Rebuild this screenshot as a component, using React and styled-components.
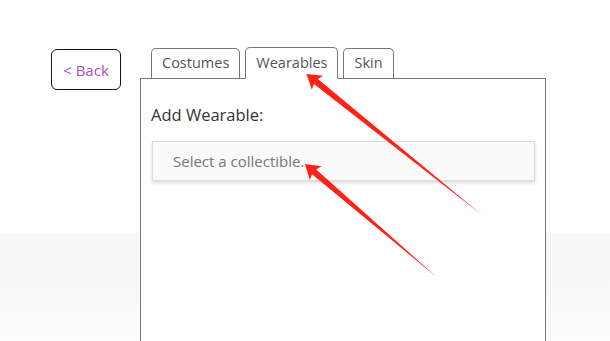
import styled, { createGlobalStyle } from "styled-components";
import { useState } from "react";

const GlobalStyle = createGlobalStyle`
  html, body {
    margin: 0;
    padding: 0;
  }
  body {
    min-height: 341px;
    font-family: "Open Sans", "Noto Sans", sans-serif;
    background: linear-gradient(
      to bottom,
      #ffffff 0,
      #ffffff 232px,
      #f7f7f7 233px,
      #f9f9f9 290px,
      #fcfcfc 341px
    );
    background-repeat: no-repeat;
    overflow: hidden;
  }
`;

const Styled = {
  Page: styled.div`
    position: relative;
    display: flex;
    align-items: flex-start;
    gap: 19px;
    padding: 47px 0 0 51px;
    height: 341px;
    box-sizing: border-box;
    overflow: hidden;
  `,

  BackButton: styled.button`
    margin-top: 2px;
    width: 70px;
    height: 41px;
    box-sizing: border-box;
    border: 1px solid #111;
    border-radius: 6px;
    background: #fff;
    color: #a64fbf;
    font-family: inherit;
    font-size: 15px;
    padding: 0;
    cursor: pointer;
  `,

  Editor: styled.div`
    display: flex;
    flex-direction: column;
    width: 406px;
  `,

  TabList: styled.div`
    display: flex;
    align-items: flex-end;
    gap: 5px;
    padding-left: 11px;
    position: relative;
    z-index: 1;
  `,

  Tab: styled.button`
    height: ${({ $active }) => ($active ? "32px" : "30px")};
    margin-bottom: ${({ $active }) => ($active ? "-1px" : "0")};
    box-sizing: border-box;
    padding: 0 10px;
    border: 1px solid #777;
    border-bottom: ${({ $active }) => ($active ? "1px solid #fff" : "none")};
    border-radius: 5px 5px 0 0;
    background: #fff;
    color: #555;
    font-family: inherit;
    font-size: 14.5px;
    line-height: 1;
    cursor: pointer;
  `,

  Panel: styled.div`
    border: 1px solid #777;
    background: #fff;
    min-height: 300px;
    padding: 24px 10px 0 10px;
  `,

  Label: styled.div`
    font-size: 16.5px;
    color: #333;
    line-height: 24px;
    margin-bottom: 14px;
  `,

  Select: styled.div`
    margin: 0 0 0 1px;
    height: 40px;
    box-sizing: border-box;
    display: flex;
    align-items: center;
    padding-left: 20px;
    background: #fafafa;
    border: 1px solid #dcdcdc;
    box-shadow: 0 2px 3px rgba(0, 0, 0, 0.14);
    color: #777;
    font-size: 15px;
  `,

  Annotations: styled.svg`
    position: absolute;
    left: 0;
    top: 0;
    width: 610px;
    height: 341px;
    pointer-events: none;
    z-index: 2;
  `,
};

const arrowPoints = (tip, tail, head = 14, barb = 9, shaft = 3.2) => {
  const dx = tail[0] - tip[0];
  const dy = tail[1] - tip[1];
  const len = Math.hypot(dx, dy);
  const ux = dx / len;
  const uy = dy / len;
  const px = -uy;
  const py = ux;
  const base = [tip[0] + ux * head, tip[1] + uy * head];
  const inner = [tip[0] + ux * (head - 2), tip[1] + uy * (head - 2)];
  const pts = [
    tip,
    [base[0] - px * barb, base[1] - py * barb],
    [inner[0] - px * shaft, inner[1] - py * shaft],
    tail,
    [inner[0] + px * shaft, inner[1] + py * shaft],
    [base[0] + px * barb, base[1] + py * barb],
  ];
  return pts.map((p) => p.map((v) => v.toFixed(1)).join(",")).join(" ");
};

const tabs = ["Costumes", "Wearables", "Skin"];

function App() {
  const [active, setActive] = useState("Wearables");
  return (
    <>
      <GlobalStyle />
      <Styled.Page>
        <Styled.BackButton>&lt; Back</Styled.BackButton>
        <Styled.Editor>
          <Styled.TabList>
            {tabs.map((t) => (
              <Styled.Tab
                key={t}
                $active={t === active}
                onClick={() => setActive(t)}
              >
                {t}
              </Styled.Tab>
            ))}
          </Styled.TabList>
          <Styled.Panel>
            <Styled.Label>Add Wearable:</Styled.Label>
            <Styled.Select>Select a collectible.</Styled.Select>
          </Styled.Panel>
        </Styled.Editor>

        <Styled.Annotations viewBox="0 0 610 341">
          <polygon points={arrowPoints([306.5, 74], [482, 215])} fill="#ff2217" />
          <polygon points={arrowPoints([305, 164], [436.5, 277])} fill="#ff2217" />
        </Styled.Annotations>
      </Styled.Page>
    </>
  );
}

export default App;
